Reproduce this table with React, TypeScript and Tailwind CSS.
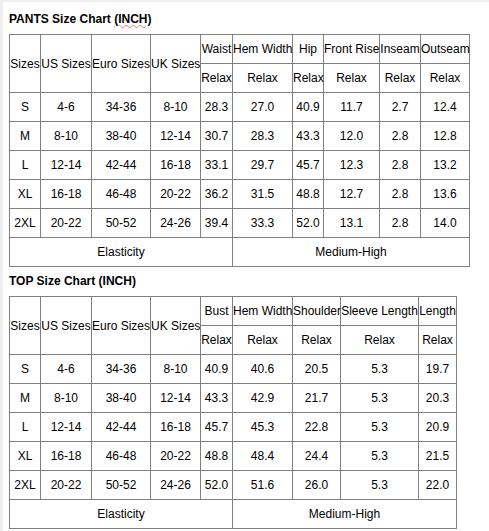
import React from "react";

type Chart = {
  title: string;
  squiggle: boolean;
  measures: string[];
  widths: number[];
  rows: string[][];
};

const sizes = [
  ["S", "4-6", "34-36", "8-10"],
  ["M", "8-10", "38-40", "12-14"],
  ["L", "12-14", "42-44", "16-18"],
  ["XL", "16-18", "46-48", "20-22"],
  ["2XL", "20-22", "50-52", "24-26"],
];

const pants: Chart = {
  title: "PANTS Size Chart",
  squiggle: true,
  measures: ["Waist", "Hem Width", "Hip", "Front Rise", "Inseam", "Outseam"],
  widths: [31, 51, 59, 50, 32, 60, 31, 56, 41, 49],
  rows: [
    ["28.3", "27.0", "40.9", "11.7", "2.7", "12.4"],
    ["30.7", "28.3", "43.3", "12.0", "2.8", "12.8"],
    ["33.1", "29.7", "45.7", "12.3", "2.8", "13.2"],
    ["36.2", "31.5", "48.8", "12.7", "2.8", "13.6"],
    ["39.4", "33.3", "52.0", "13.1", "2.8", "14.0"],
  ],
};

const top: Chart = {
  title: "TOP Size Chart",
  squiggle: false,
  measures: ["Bust", "Hem Width", "Shoulder", "Sleeve Length", "Length"],
  widths: [31, 51, 59, 50, 32, 60, 48, 78, 38],
  rows: [
    ["40.9", "40.6", "20.5", "5.3", "19.7"],
    ["43.3", "42.9", "21.7", "5.3", "20.3"],
    ["45.7", "45.3", "22.8", "5.3", "20.9"],
    ["48.8", "48.4", "24.4", "5.3", "21.5"],
    ["52.0", "51.6", "26.0", "5.3", "22.0"],
  ],
};

const cell = "border border-[#808080] p-0 text-center align-middle whitespace-nowrap font-normal";

function SizeChart({ c, first }: { c: Chart; first: boolean }) {
  const total = c.widths.reduce((a, b) => a + b, 0);
  return (
    <div>
      <div
        className={
          (first ? "mt-[10px]" : "mt-[7px]") +
          " mb-[8px] h-[14px] text-[12px] leading-[14px] font-bold text-black"
        }
      >
        {c.title}{" "}
        <span
          className={
            c.squiggle
              ? "underline decoration-wavy decoration-[#e88080] decoration-1 underline-offset-[1px]"
              : ""
          }
        >
          (INCH)
        </span>
      </div>
      <table
        className="border-collapse table-fixed text-[12px] leading-[14px] text-black"
        style={{ width: total }}
      >
        <colgroup>
          {c.widths.map((w, i) => (
            <col key={i} style={{ width: w }} />
          ))}
        </colgroup>
        <tbody>
          <tr className="h-[29px]">
            <td rowSpan={2} className={cell}>Sizes</td>
            <td rowSpan={2} className={cell}>US Sizes</td>
            <td rowSpan={2} className={cell}>Euro Sizes</td>
            <td rowSpan={2} className={cell}>UK Sizes</td>
            {c.measures.map((m) => (
              <td key={m} className={cell}>{m}</td>
            ))}
          </tr>
          <tr className="h-[29px]">
            {c.measures.map((m) => (
              <td key={m} className={cell}>Relax</td>
            ))}
          </tr>
          {sizes.map((s, i) => (
            <tr key={s[0]} className="h-[29px]">
              {s.map((v, j) => (
                <td key={j} className={cell}>{v}</td>
              ))}
              {c.rows[i].map((v, j) => (
                <td key={"m" + j} className={cell}>{v}</td>
              ))}
            </tr>
          ))}
          <tr className="h-[29px]">
            <td colSpan={5} className={cell}>Elasticity</td>
            <td colSpan={c.measures.length - 1} className={cell}>Medium-High</td>
          </tr>
        </tbody>
      </table>
    </div>
  );
}

export default function App() {
  return (
    <div
      className="min-h-[531px] w-[489px] bg-white border-t-2 border-l-[3px] border-[#efefef] pl-[6px]"
      style={{ fontFamily: '"Liberation Sans", Arial, sans-serif' }}
    >
      <SizeChart c={pants} first={true} />
      <SizeChart c={top} first={false} />
    </div>
  );
}
